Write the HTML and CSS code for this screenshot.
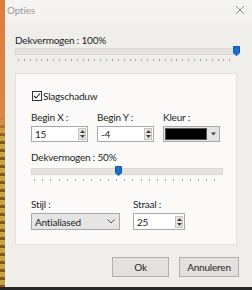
FILE: index.html
```
<!DOCTYPE html>
<html lang="nl">
<head>
    <meta charset="UTF-8">
    <title>Opties</title>
    <link rel="stylesheet" href="styles.css">
</head>
<body>
    <div class="screen">
        <div class="desk"></div>
        <div class="dialog">
            <div class="titlebar">
                <span class="title">Opties</span>
                <svg class="close" width="10" height="10" viewBox="0 0 10 10"><path d="M1 1L9 9M9 1L1 9" stroke="#8a8a8a" stroke-width="1"/></svg>
            </div>
            <div class="content">
                <div class="label">Dekvermogen : 100%</div>
                <div class="slider wide">
                    <div class="track"></div>
                    <svg class="thumb" style="left: 218px" width="7" height="10" viewBox="0 0 7 10"><path d="M0.5 0.5H6.5V7L3.5 9.5L0.5 7Z" fill="#1b6fcc" stroke="#0d5bb0"/></svg>
                    <div class="ticks"></div>
                </div>

                <div class="group">
                    <div class="check">
                        <svg class="box" width="10" height="10" viewBox="0 0 10 10"><rect x="0.5" y="0.5" width="9" height="9" fill="#fff" stroke="#333"/><path d="M2 5L4 7L8 2.5" fill="none" stroke="#222" stroke-width="1.1"/></svg>
                        <span>Slagschaduw</span>
                    </div>

                    <div class="row3">
                        <div class="field">
                            <div class="label">Begin X :</div>
                            <div class="spin"><span class="val">15</span><span class="arrows"><svg width="7" height="12" viewBox="0 0 7 12"><path d="M3.5 2L6 5H1Z M3.5 10L6 7H1Z" fill="#444"/></svg></span></div>
                        </div>
                        <div class="field">
                            <div class="label">Begin Y :</div>
                            <div class="spin"><span class="val">-4</span><span class="arrows"><svg width="7" height="12" viewBox="0 0 7 12"><path d="M3.5 2L6 5H1Z M3.5 10L6 7H1Z" fill="#444"/></svg></span></div>
                        </div>
                        <div class="field">
                            <div class="label">Kleur :</div>
                            <div class="color"><span class="swatch"></span><span class="drop"><svg width="7" height="4" viewBox="0 0 7 4"><path d="M1 0.5H6L3.5 3.5Z" fill="#444"/></svg></span></div>
                        </div>
                    </div>

                    <div class="label gap">Dekvermogen : 50%</div>
                    <div class="slider narrow">
                        <div class="track"></div>
                        <svg class="thumb" style="left: 84px" width="7" height="10" viewBox="0 0 7 10"><path d="M0.5 0.5H6.5V7L3.5 9.5L0.5 7Z" fill="#1b6fcc" stroke="#0d5bb0"/></svg>
                        <div class="ticks"></div>
                    </div>

                    <div class="row2">
                        <div class="field">
                            <div class="label">Stijl :</div>
                            <div class="select"><span>Antialiased</span><svg width="8" height="5" viewBox="0 0 8 5"><path d="M0.5 0.5L4 4L7.5 0.5" fill="none" stroke="#555"/></svg></div>
                        </div>
                        <div class="field">
                            <div class="label">Straal :</div>
                            <div class="spin small"><span class="val">25</span><span class="arrows"><svg width="7" height="12" viewBox="0 0 7 12"><path d="M3.5 2L6 5H1Z M3.5 10L6 7H1Z" fill="#444"/></svg></span></div>
                        </div>
                    </div>
                </div>

                <div class="buttons">
                    <button class="btn ok">Ok</button>
                    <button class="btn">Annuleren</button>
                </div>
            </div>
        </div>
        <div class="taskbar"></div>
    </div>
</body>
</html>
```

FILE: styles.css
```
:root {
    --dialog-bg: #efeeeb;
    --panel-bg: #fbfaf8;
    --text: #1e1e1e;
    --border: #a9a9a9;
}

body {
    margin: 0;
    font-family: Lato, "Noto Sans", sans-serif;
    font-size: 10px;
    letter-spacing: -0.2px;
    color: var(--text);
    overflow: hidden;
}

.screen {
    position: relative;
    width: 252px;
    height: 290px;
    display: flex;
}

.desk {
    width: 5px;
    background:
        linear-gradient(180deg, #df7c3c 0%, #d98746 40%, transparent 48%),
        repeating-linear-gradient(180deg, #c9a23e 0px, #c9a23e 5px, #7d5a24 5px, #7d5a24 8px);
}

.dialog {
    flex: 1;
    background: var(--dialog-bg);
    display: flex;
    flex-direction: column;
}

.titlebar {
    height: 24px;
    background: linear-gradient(180deg, #f6f5f3 0%, #f2f1ee 100%);
    display: flex;
    justify-content: space-between;
    padding: 3px 7px 0 2px;
    box-sizing: border-box;
}

.title {
    color: #9a9a9a;
    line-height: 14px;
}

.close {
    margin-top: 2px;
}

.content {
    padding: 9px 15px 0 10px;
}

.label {
    line-height: 14px;
    height: 14px;
}

/* sliders */
.slider {
    position: relative;
    height: 17px;
}

.slider.wide {
    margin-top: -1px;
}

.slider .track {
    position: absolute;
    left: 0;
    right: 0;
    top: 2px;
    height: 5px;
    background: #e4e3e0;
    border: 1px solid #d8d7d4;
}

.slider .thumb {
    position: absolute;
    top: 0;
}

.slider .ticks {
    position: absolute;
    left: 3px;
    right: 2px;
    top: 13px;
    height: 2px;
    background: repeating-linear-gradient(90deg, #a9a9a7 0px, #a9a9a7 1px, transparent 1px, transparent 5.87px);
}

.slider.narrow {
    width: 192px;
    margin-top: 2px;
}

.slider.narrow .ticks {
    background: repeating-linear-gradient(90deg, #a9a9a7 0px, #a9a9a7 1px, transparent 1px, transparent 8.2px);
}

/* group panel */
.group {
    margin-top: 10px;
    height: 172px;
    box-sizing: border-box;
    background: var(--panel-bg);
    border: 1px solid #e2e1de;
    padding: 14px 0 0 15px;
}

.check {
    display: flex;
    align-items: center;
    gap: 1px;
    line-height: 16px;
    margin-left: 1px;
}

.row3 {
    display: flex;
    gap: 9px;
    margin-top: 6px;
}

.row3 .field {
    width: 57px;
}

.field .label {
    margin-bottom: 2px;
}

.spin {
    height: 16px;
    box-sizing: border-box;
    border: 1px solid var(--border);
    background: #fff;
    display: flex;
    justify-content: space-between;
    align-items: center;
    padding: 0 1px 0 3px;
}

.val {
    line-height: 14px;
}

.arrows {
    width: 8px;
    height: 12px;
    background: #e6e6e6;
    border: 1px solid #c4c4c4;
    box-sizing: border-box;
    display: flex;
    align-items: center;
    justify-content: center;
}

.arrows svg {
    flex: none;
}

.color {
    height: 16px;
    box-sizing: border-box;
    border: 1px solid var(--border);
    background: #e3e3e3;
    display: flex;
    align-items: center;
    padding: 1px;
    gap: 1px;
}

.swatch {
    width: 42px;
    height: 12px;
    background: #000;
    border: 1px solid #555;
    box-sizing: border-box;
}

.drop {
    flex: 1;
    display: flex;
    justify-content: center;
}

.label.gap {
    margin-top: 8px;
}

.row2 {
    display: flex;
    gap: 13px;
    margin-top: 14px;
}

.select {
    width: 89px;
    height: 17px;
    box-sizing: border-box;
    border: 1px solid var(--border);
    background: #e5e5e5;
    display: flex;
    justify-content: space-between;
    align-items: center;
    padding: 0 4px 0 3px;
    line-height: 14px;
}

.spin.small {
    width: 52px;
    height: 17px;
}

/* buttons */
.buttons {
    display: flex;
    justify-content: flex-end;
    gap: 10px;
    margin-top: 12px;
    margin-right: -2px;
}

.btn {
    height: 20px;
    width: 60px;
    padding: 0;
    font-family: inherit;
    font-size: 10px;
    letter-spacing: -0.2px;
    color: var(--text);
    background: #e2e1df;
    border: 1px solid #b0b0ae;
    border-radius: 0;
}

.btn.ok {
    width: 57px;
}

.taskbar {
    position: absolute;
    left: 0;
    right: 0;
    bottom: 0;
    height: 3px;
    background: #262626;
}
```
